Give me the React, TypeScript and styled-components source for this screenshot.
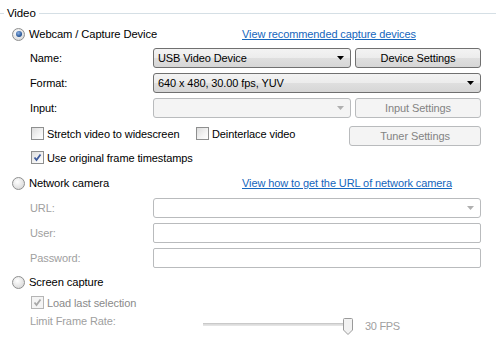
import styled, { createGlobalStyle } from "styled-components";

const GlobalStyle = createGlobalStyle`
  body {
    margin: 0;
    background: #ffffff;
    font-family: "Liberation Sans", Arial, sans-serif;
    font-size: 11px;
    letter-spacing: -0.1px;
    color: #000000;
  }
`;

const Panel = styled.div`
  width: 496px;
  height: 340px;
  overflow: hidden;
  display: flex;
  flex-direction: column;
  white-space: nowrap;
`;

const GroupHeader = styled.div`
  display: flex;
  align-items: center;
  height: 18px;
  margin-top: 4px;
  gap: 3px;
  font-size: 11.5px;

  &::before {
    content: "";
    width: 4px;
    border-top: 1px solid #d5dfe5;
  }
  &::after {
    content: "";
    flex: 1;
    border-top: 1px solid #d5dfe5;
  }
`;

const OptionRow = styled.div<{ $top: number }>`
  display: grid;
  grid-template-columns: 230px 1fr;
  align-items: center;
  height: 20px;
  margin-top: ${(p) => p.$top}px;
  padding-left: 12px;
  font-size: 11.2px;
`;

const RadioLabel = styled.label`
  display: flex;
  align-items: center;
  gap: 4px;
`;

const RadioDot = styled.span<{ $checked?: boolean }>`
  width: 11px;
  height: 11px;
  border-radius: 50%;
  border: 1px solid #8e8f8f;
  background: radial-gradient(circle at 40% 35%, #ffffff, #dcdcdc 75%, #c8c8c8);
  display: flex;
  align-items: center;
  justify-content: center;

  &::after {
    content: "";
    display: ${(p) => (p.$checked ? "block" : "none")};
    width: 6px;
    height: 6px;
    border-radius: 50%;
    background: radial-gradient(circle at 40% 35%, #8fb3e4, #1f4f91 70%, #17386a);
  }
`;

const Link = styled.a`
  color: #1566bd;
  text-decoration: underline;
  cursor: pointer;
  font-size: 11px;
`;

const FieldRow = styled.div<{ $top: number }>`
  display: grid;
  grid-template-columns: 119px 198px 126px;
  column-gap: 4px;
  align-items: center;
  padding-left: 30px;
  margin-top: ${(p) => p.$top}px;
`;

const FieldLabel = styled.span<{ $disabled?: boolean }>`
  color: ${(p) => (p.$disabled ? "#a0a0a0" : "#000000")};
`;

const Combo = styled.div<{ $wide?: boolean; $disabled?: boolean; $plain?: boolean }>`
  grid-column: ${(p) => (p.$wide ? "2 / 4" : "auto")};
  height: 20px;
  box-sizing: border-box;
  border: 1px solid ${(p) => (p.$disabled || p.$plain ? "#b9bbbd" : "#707070")};
  border-radius: 3px;
  background: ${(p) =>
    p.$plain
      ? "#ffffff"
      : p.$disabled
      ? "#f4f4f4"
      : "linear-gradient(#f3f3f3, #ececec 50%, #dfdfdf 50%, #d6d6d6)"};
  display: flex;
  align-items: center;
  justify-content: space-between;
  padding: 0 6px 0 4px;
`;

const Arrow = ({ color }: { color: string }) => (
  <svg width="7" height="4" viewBox="0 0 7 4">
    <path d="M0 0 H7 L3.5 4 Z" fill={color} />
  </svg>
);

const Button = styled.button<{ $disabled?: boolean }>`
  height: 20px;
  box-sizing: border-box;
  border: 1px solid ${(p) => (p.$disabled ? "#b9bbbd" : "#707070")};
  border-radius: 3px;
  background: ${(p) =>
    p.$disabled
      ? "#f4f4f4"
      : "linear-gradient(#f3f3f3, #ececec 50%, #dfdfdf 50%, #d6d6d6)"};
  color: ${(p) => (p.$disabled ? "#838383" : "#000000")};
  font: inherit;
  letter-spacing: inherit;
  padding: 0;
`;

const TextBox = styled.div`
  grid-column: 2 / 4;
  height: 20px;
  box-sizing: border-box;
  border: 1px solid #b9bbbd;
  border-radius: 2px;
  background: #ffffff;
`;

const CheckRow = styled.div<{ $top: number }>`
  display: grid;
  grid-template-columns: 165px 153px 132px;
  align-items: center;
  padding-left: 31px;
  margin-top: ${(p) => p.$top}px;
`;

const CheckLabel = styled.label<{ $disabled?: boolean; $raise?: number }>`
  display: flex;
  align-items: center;
  gap: 3px;
  margin-bottom: ${(p) => p.$raise ?? 0}px;
  color: ${(p) => (p.$disabled ? "#8a8a8a" : "#000000")};
`;

const CheckBox = styled.span<{ $disabled?: boolean }>`
  width: 11px;
  height: 11px;
  border: 1px solid ${(p) => (p.$disabled ? "#b5b5b5" : "#8e8f8f")};
  background: ${(p) =>
    p.$disabled ? "#f4f4f4" : "linear-gradient(135deg, #dcdcdc, #f4f4f4 60%, #ffffff)"};
  display: flex;
  align-items: center;
  justify-content: center;
`;

const Check = ({ color }: { color: string }) => (
  <svg width="9" height="9" viewBox="0 0 9 9">
    <path d="M1.5 4.5 L3.5 7 L7.5 1.5" stroke={color} strokeWidth="1.8" fill="none" />
  </svg>
);

const SliderRow = styled.div`
  display: grid;
  grid-template-columns: 173px 150px auto;
  align-items: center;
  padding-left: 30px;
  margin-top: 1px;
  height: 20px;
  color: #a0a0a0;
`;

const Track = styled.div`
  position: relative;
  height: 3px;
  box-sizing: border-box;
  border-top: 1px solid #c9c9c9;
  border-bottom: 1px solid #e4e4e4;
  background: #dcdcdc;
  margin-top: 6px;
`;

const Thumb = styled.svg`
  position: absolute;
  right: 0;
  top: -6px;
`;

const FpsText = styled.span`
  margin-left: 12px;
  margin-top: 10px;
  font-size: 11px;
  letter-spacing: -0.3px;
`;

export default function App() {
  return (
    <Panel>
      <GlobalStyle />
      <GroupHeader>Video</GroupHeader>

      <OptionRow $top={2}>
        <RadioLabel>
          <RadioDot $checked />
          Webcam / Capture Device
        </RadioLabel>
        <Link>View recommended capture devices</Link>
      </OptionRow>

      <FieldRow $top={4}>
        <FieldLabel>Name:</FieldLabel>
        <Combo>
          <span>USB Video Device</span>
          <Arrow color="#000" />
        </Combo>
        <Button>Device Settings</Button>
      </FieldRow>
      <FieldRow $top={5}>
        <FieldLabel>Format:</FieldLabel>
        <Combo $wide>
          <span>640 x 480, 30.00 fps, YUV</span>
          <Arrow color="#000" />
        </Combo>
      </FieldRow>
      <FieldRow $top={5}>
        <FieldLabel>Input:</FieldLabel>
        <Combo $disabled>
          <span />
          <Arrow color="#b0b0b0" />
        </Combo>
        <Button $disabled>Input Settings</Button>
      </FieldRow>

      <CheckRow $top={8}>
        <CheckLabel $raise={5}>
          <CheckBox />
          Stretch video to widescreen
        </CheckLabel>
        <CheckLabel $raise={5}>
          <CheckBox />
          Deinterlace video
        </CheckLabel>
        <Button $disabled>Tuner Settings</Button>
      </CheckRow>
      <CheckRow $top={5}>
        <CheckLabel>
          <CheckBox>
            <Check color="#3d5a9c" />
          </CheckBox>
          Use original frame timestamps
        </CheckLabel>
      </CheckRow>

      <OptionRow $top={9}>
        <RadioLabel>
          <RadioDot />
          Network camera
        </RadioLabel>
        <Link>View how to get the URL of network camera</Link>
      </OptionRow>
      <FieldRow $top={5}>
        <FieldLabel $disabled>URL:</FieldLabel>
        <Combo $wide $plain>
          <span />
          <Arrow color="#b0b0b0" />
        </Combo>
      </FieldRow>
      <FieldRow $top={5}>
        <FieldLabel $disabled>User:</FieldLabel>
        <TextBox />
      </FieldRow>
      <FieldRow $top={5}>
        <FieldLabel $disabled>Password:</FieldLabel>
        <TextBox />
      </FieldRow>

      <OptionRow $top={4}>
        <RadioLabel>
          <RadioDot />
          Screen capture
        </RadioLabel>
      </OptionRow>
      <CheckRow $top={4}>
        <CheckLabel $disabled>
          <CheckBox $disabled>
            <Check color="#a8a8a8" />
          </CheckBox>
          Load last selection
        </CheckLabel>
      </CheckRow>
      <SliderRow>
        <span>Limit Frame Rate:</span>
        <Track>
          <Thumb width="10" height="17" viewBox="0 0 10 17">
            <path
              d="M0.5 1.5 Q0.5 0.5 1.5 0.5 H8.5 Q9.5 0.5 9.5 1.5 V12 L5 16.5 L0.5 12 Z"
              fill="#f2f2f2"
              stroke="#9a9a9a"
            />
          </Thumb>
        </Track>
        <FpsText>30 FPS</FpsText>
      </SliderRow>
    </Panel>
  );
}
